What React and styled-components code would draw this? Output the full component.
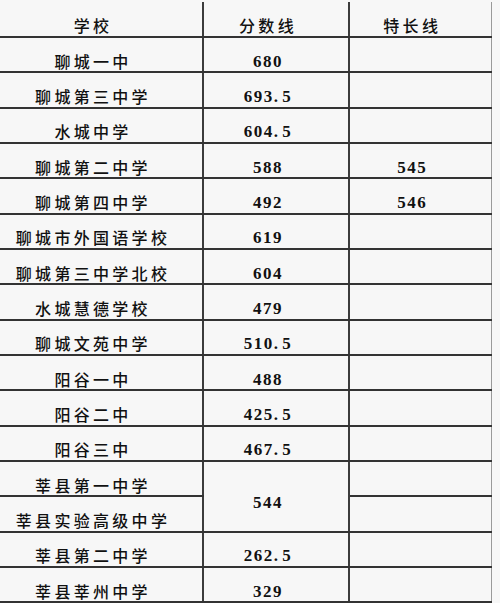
import React from "react";
import styled, { createGlobalStyle } from "styled-components";

const Global = createGlobalStyle`
  html, body {
    margin: 0;
    padding: 0;
    background: #f7f7f7;
    overflow: hidden;
  }
  #root { padding-top: 2px; }
`;

const Table = styled.table`
  border-collapse: collapse;
  border-spacing: 0;
  table-layout: fixed;
  width: 491px;
  color: #111;
`;

const Col = styled.col`
  width: ${(p) => p.$w}px;
`;

const Row = styled.tr`
  height: ${(p) => (p.$head ? 35 : 35.33)}px;
`;

const Cell = styled.td`
  padding: 12px 16px 0 0;
  text-align: center;
  vertical-align: middle;
  border-bottom: 2px solid #333;
  border-right: ${(p) => (p.$last ? "1.5px solid #9a9a9a" : "2px solid #3c3c3c")};
  white-space: nowrap;
  font-family: "Noto Sans CJK SC", "Noto Sans", sans-serif;
  font-size: 16px;
  font-weight: 500;
  letter-spacing: 3.3px;
  line-height: 18px;
`;

const NumText = styled.span`
  font-family: "Liberation Serif", "Noto Sans CJK SC", serif;
  font-size: 17px;
  font-weight: 700;
  letter-spacing: 1.5px;
  color: #111;
`;

const Dot = styled.span`
  display: inline-block;
  width: 8.5px;
  text-align: left;
`;

function Num({ value }) {
  if (!value) return null;
  const [a, b] = value.split(".");
  return (
    <NumText>
      {a}
      {b !== undefined && (
        <>
          <Dot>.</Dot>
          {b}
        </>
      )}
    </NumText>
  );
}

const rows = [
  ["聊城一中", "680", ""],
  ["聊城第三中学", "693.5", ""],
  ["水城中学", "604.5", ""],
  ["聊城第二中学", "588", "545"],
  ["聊城第四中学", "492", "546"],
  ["聊城市外国语学校", "619", ""],
  ["聊城第三中学北校", "604", ""],
  ["水城慧德学校", "479", ""],
  ["聊城文苑中学", "510.5", ""],
  ["阳谷一中", "488", ""],
  ["阳谷二中", "425.5", ""],
  ["阳谷三中", "467.5", ""],
  ["莘县第一中学", "544", "", 2],
  ["莘县实验高级中学", null, ""],
  ["莘县第二中学", "262.5", ""],
  ["莘县莘州中学", "329", ""],
];

export default function App() {
  return (
    <>
      <Global />
      <Table>
        <colgroup>
          <Col $w={203} />
          <Col $w={146} />
          <Col $w={142} />
        </colgroup>
        <tbody>
          <Row $head>
            <Cell>学校</Cell>
            <Cell>分数线</Cell>
            <Cell $last>特长线</Cell>
          </Row>
          {rows.map(([name, score, special, span], i) => (
            <Row key={i}>
              <Cell>{name}</Cell>
              {score !== null && (
                <Cell rowSpan={span || 1}>
                  <Num value={score} />
                </Cell>
              )}
              <Cell $last>
                <Num value={special} />
              </Cell>
            </Row>
          ))}
        </tbody>
      </Table>
    </>
  );
}
